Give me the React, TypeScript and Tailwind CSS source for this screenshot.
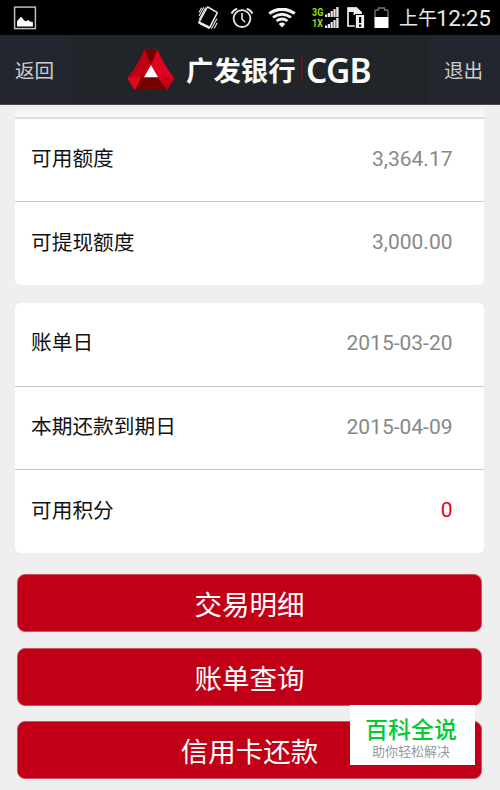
const CREDIT = [
  { label: '可用额度', value: '3,364.17' },
  { label: '可提现额度', value: '3,000.00' },
]

const BILL = [
  { label: '账单日', value: '2015-03-20' },
  { label: '本期还款到期日', value: '2015-04-09' },
  { label: '可用积分', value: '0', red: true },
]

const ACTIONS = ['交易明细', '账单查询', '信用卡还款']

type RowData = { label: string; value: string; red?: boolean }

function Row({ label, value, red }: RowData) {
  return (
    <div className="flex flex-1 items-center justify-between pl-4 pr-[31.5px] pb-[3px] text-[20.7px] leading-[30px]">
      <span className="pt-px text-[#111]">{label}</span>
      <span className={red ? 'text-[21px] text-[#e60026]' : 'text-[21px] text-[#888]'}>{value}</span>
    </div>
  )
}

function SignalBars() {
  return (
    <svg width="14" height="10" viewBox="0 0 14 10" fill="#e6e6e6">
      <rect x="0" y="7.5" width="2.2" height="2.5" />
      <rect x="2.8" y="6" width="2.2" height="4" />
      <rect x="5.6" y="4" width="2.2" height="6" />
      <rect x="8.4" y="2" width="2.2" height="8" />
      <rect x="11.2" y="0" width="2.4" height="10" />
    </svg>
  )
}

function StatusBar() {
  return (
    <div className="flex h-[35px] items-center bg-black pl-[13px]">
      {/* 截图通知 */}
      <svg width="24" height="24" viewBox="0 0 24 24">
        <rect x="1.6" y="1.1" width="20.8" height="21.5" fill="none" stroke="#bdbdbd" strokeWidth="1.5" />
        <path d="M4 20.5v-5.2l1.5-1.8 2-2.5 1.3.3 2.4 3.2 1.5.8 2.6-1.4 1.5 1.6 3 .5.2 4.5z" fill="#fff" />
      </svg>

      {/* 振动 */}
      <svg className="ml-[161px]" width="20" height="24" viewBox="0 0 20 24" fill="none" stroke="#e6e6e6">
        <path d="M10.2 1.2 18.6 6.1Q19.4 6.6 19 7.4L11.9 21.2Q11.4 22.2 10.5 21.7L1.5 17Q.8 16.6 1.2 15.8L8.8 1.8Q9.3.8 10.2 1.2z" strokeWidth="1.6" />
        <path d="M1.2 15.8 11.6 20.8 11 22.3 1.2 17.5z" fill="#fff" />
        <path d="M1 6.5 3.6 1.8M1 10 5.8 1.2M1.2 13.4 7.6 1.8M13.4 22.8 19 12.4M16.2 22.5 19.2 16.8" strokeWidth="1.1" />
      </svg>

      {/* 闹钟 */}
      <svg className="ml-3" width="24" height="24" viewBox="0 0 24 24" fill="none" stroke="#e6e6e6">
        <circle cx="12" cy="12.6" r="8.4" strokeWidth="1.8" />
        <path d="M12 7v6l3 3.2" strokeWidth="1.6" />
        <path d="M1.5 7.7Q3 4.2 7.2 2.6M22.5 7.7Q21 4.2 16.8 2.6" strokeWidth="1.9" />
      </svg>

      {/* WiFi */}
      <svg className="ml-[14px] mt-px" width="28" height="20" viewBox="0 0 28 20" fill="none" stroke="#f2f2f2">
        <path d="M1.2 5.5Q14-3 26.8 5.5" strokeWidth="3.3" />
        <path d="M5 9.4Q14 3 23 9.4" strokeWidth="3" />
        <path d="M8.5 13Q14 9 19.5 13" strokeWidth="2.7" />
        <path d="M10.8 16Q14 13.2 17.2 16L14 19.5z" fill="#f2f2f2" stroke="none" />
      </svg>

      {/* 双卡信号 */}
      <div className="ml-4 w-[27px] text-[10px] font-bold leading-[11px] text-[#98dc12]">
        <div className="flex h-[11px] items-center justify-between">
          <span className="w-3 origin-left scale-x-[.9]">3G</span>
          <SignalBars />
        </div>
        <div className="flex h-[11px] items-center justify-between">
          <span className="w-3 origin-left scale-x-[.9]">1X</span>
          <SignalBars />
        </div>
      </div>

      {/* SIM 卡 */}
      <svg className="ml-[8px]" width="19" height="24" viewBox="0 0 19 24">
        <path d="M1 2h8.5L14 6.3V20H1z" fill="none" stroke="#eee" strokeWidth="1.7" />
        <path d="M1 1.5h8.7l4.6 4.6V9H6.6V6H1z" fill="#eee" />
        <path d="M8.3 8.5h9.4V22.6H8.3z" fill="#eee" stroke="#000" strokeWidth="1" />
        <path d="M12 11h2.2v6H12zM12 18.6h2.2v2.2H12z" fill="#000" />
      </svg>

      {/* 电池 */}
      <svg className="ml-[8px]" width="15" height="22" viewBox="0 0 15 22">
        <path d="M1 10V4Q1 3 2 3h2.5V1h6v2H13q1 0 1 1v6" fill="none" stroke="#777" strokeWidth="1.3" />
        <path d="M.5 10h14v11H.5z" fill="#fff" />
      </svg>

      <div className="ml-[10px] flex items-center whitespace-nowrap text-[#e8e8e8]">
        <span className="mt-[3px] w-[37px] text-[19px] leading-[30px]">上午</span>
        <span className="text-[22.5px] leading-[30px] tracking-[-0.3px]">12:25</span>
      </div>
    </div>
  )
}

function Logo() {
  return (
    <svg className="ml-[57px]" width="48" height="42" viewBox="0 0 48 42">
      <path d="M17.5.5h13Q36 15 47.5 29.5L40.3 41Q24 38 7.7 41L.5 29.5Q12 15 17.5.5z" fill="#e10222" />
      <path d="M17.5.5 24 16 17 28.5.5 29.5Q12 15 17.5.5z" fill="#c00012" />
      <path d="M17.5.5h13L24 16z" fill="#750000" />
      <path d="M17 28.3h14L40.3 41Q24 38 7.7 41L14 28.6z" fill="#750000" />
      <path d="M.5 29.5Q7 27.8 14 28L7.7 41z" fill="#dc0920" />
      <path d="M34 28Q41 28 47.5 29.5L40.3 41z" fill="#bd0012" />
      <path d="M24 16 31 28.3H17z" fill="#fff" />
    </svg>
  )
}

function Header() {
  return (
    <div className="flex h-[70px] items-center border-b border-[#4a4b50] bg-[#212428] text-[#cdcdcd]">
      <div className="flex h-full w-[70px] items-center bg-[#24262f] pl-[15px] pt-[4px] text-[19.6px]">返回</div>
      <Logo />
      <div className="ml-[11px] flex items-center whitespace-nowrap text-[#f8fbf8]">
        <span className="w-[111px] pt-[5px] text-[27.4px] font-bold leading-[40px]">广发银行</span>
        <span className="ml-[4px] h-6 w-[2px] bg-[#65141f]" />
        <span className="ml-[3px] font-['Noto_Sans',sans-serif] text-[33.5px] font-semibold leading-[40px] tracking-[-0.8px]">CGB</span>
      </div>
      <div className="ml-auto flex h-full w-[71px] items-center bg-[#24262f] pl-[15px] pt-[4px] text-[19.6px]">退出</div>
    </div>
  )
}

export default function App() {
  return (
    <div className="relative h-[790px] w-[500px] overflow-hidden bg-[#efefef] font-[Roboto,'Noto_Sans_CJK_SC',sans-serif]">
      <StatusBar />
      <Header />

      <div className="px-[15px]">
        <div className="mr-px flex h-[180px] flex-col overflow-hidden rounded-b-[6px] bg-white">
          <div className="h-[14px] border-b-2 border-[#dcdcdc] bg-linear-to-b from-[#f0eeef] to-[#fafafa]" />
          <div className="flex h-[83px] border-b border-[#c8c8c8]">
            <Row {...CREDIT[0]} />
          </div>
          <div className="flex flex-1">
            <Row {...CREDIT[1]} />
          </div>
        </div>

        <div className="mr-px mt-[18px] flex h-[250px] flex-col divide-y divide-[#c8c8c8] rounded-[6px] bg-white">
          {BILL.map(r => <Row key={r.label} {...r} />)}
        </div>
      </div>

      <div className="mt-[21px] flex flex-col gap-[15.7px] pl-[17px] pr-[18px]">
        {ACTIONS.map(a => (
          <button key={a} className="h-[58px] rounded-[8px] border border-[#cf5461] bg-[#c10017] pt-[6px] text-[27.5px] leading-[40px] text-white">
            {a}
          </button>
        ))}
      </div>

      {/* 右下角角标 */}
      <div className="absolute left-[350px] top-[705px] flex h-[60px] w-[125px] flex-col items-center bg-white pt-[13px]">
        <span className="pr-[3px] text-[23px] font-medium leading-[26px] text-[#00cc33]">百科全说</span>
        <span className="pr-[3px] text-[13px] leading-[16px] text-[#999]">助你轻松解决</span>
      </div>
    </div>
  )
}
